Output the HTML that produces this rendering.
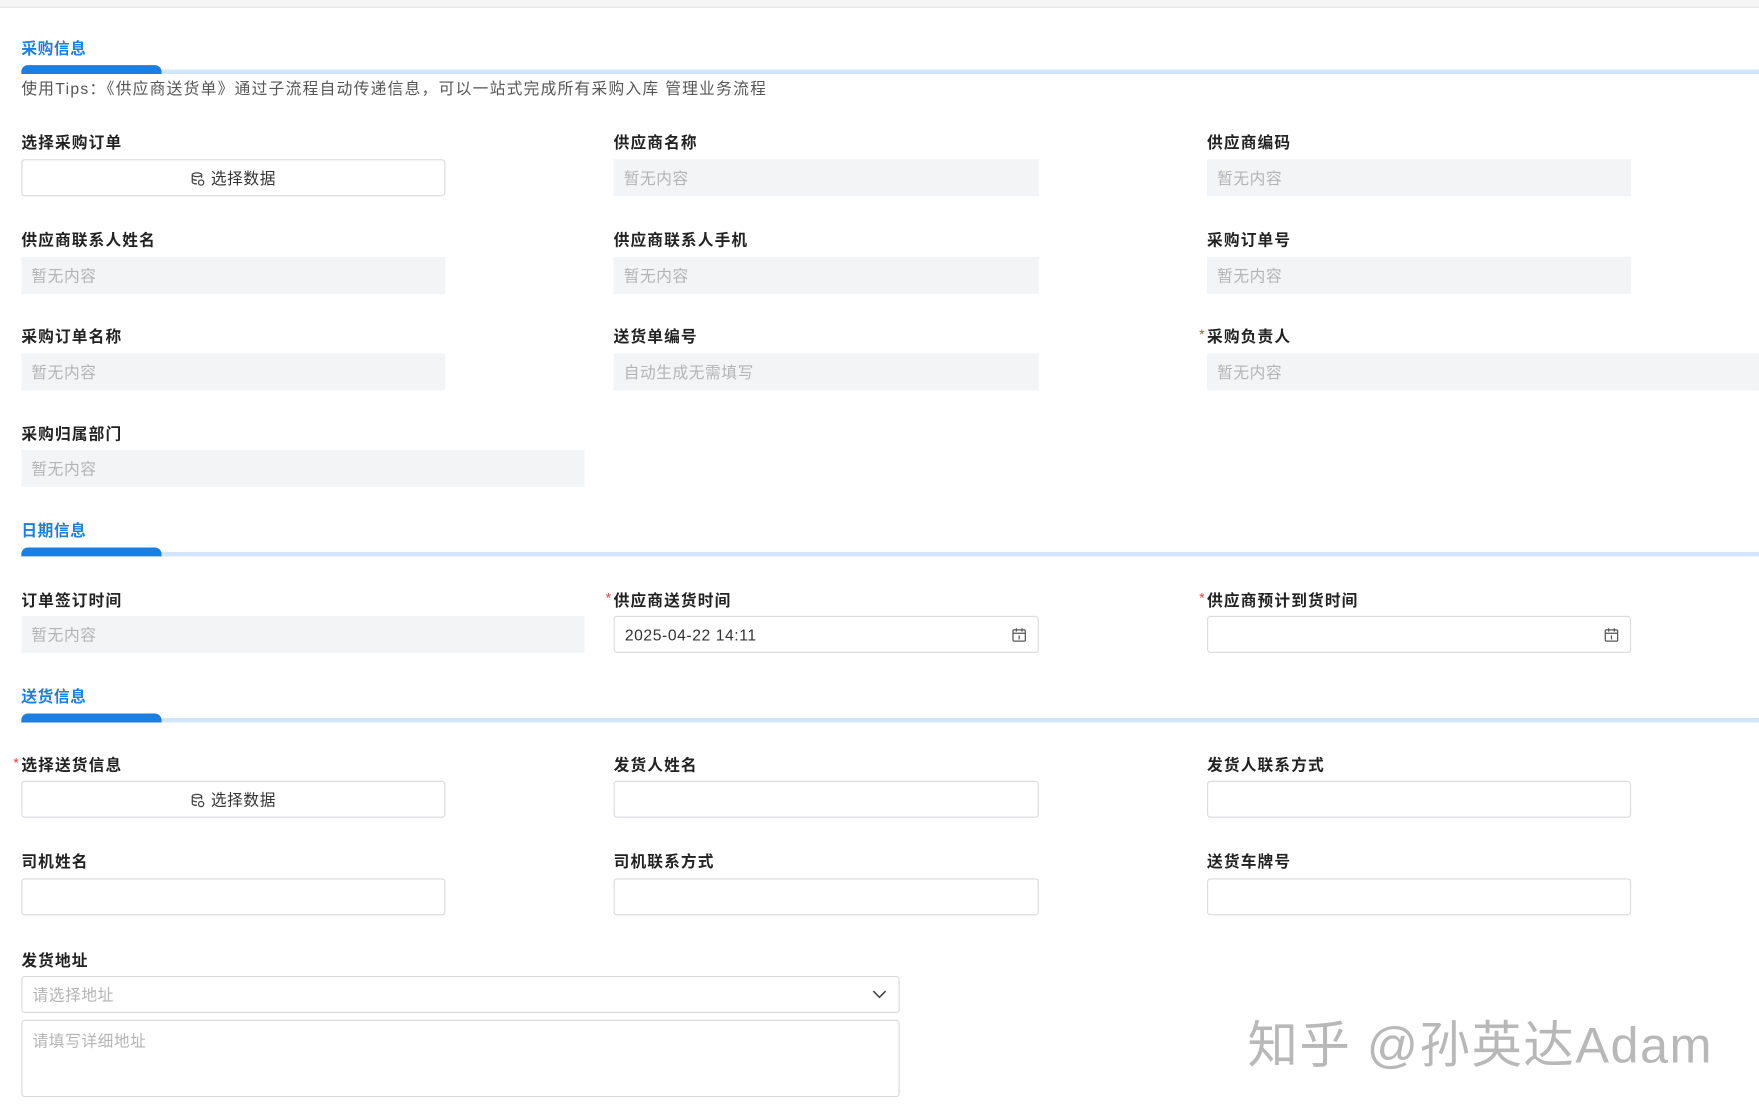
<!DOCTYPE html>
<html><head><meta charset="utf-8"><style>
html,body{margin:0;padding:0;background:#fff;width:1759px;height:1116px;overflow:hidden}
#w{position:absolute;left:0;top:0;width:1568px;height:995px;transform:scale(1.1218);transform-origin:0 0;font-family:"Liberation Sans","Noto Sans CJK SC",sans-serif}
.a{position:absolute}
.t{position:absolute;left:19px;color:#1a7fe0;font-weight:bold;font-size:14px;line-height:20px;top:1px;letter-spacing:0.5px}
.bl{position:absolute;left:19px;width:125px;height:8px;background:#1a7fe0;border-radius:6px 6px 0 0}
.ln{position:absolute;left:140px;right:0;height:4px;background:#d3e5f8}
.lb{position:absolute;font-size:14px;font-weight:bold;color:#222;line-height:22px;letter-spacing:1px}
.lb i{color:#e33;font-style:normal;font-weight:normal;position:absolute;left:-7px;top:-2px;font-size:12px}
.bx{position:absolute;height:33px;box-sizing:border-box;font-size:14px;line-height:35px;padding-left:9px;color:#b4b4b4;letter-spacing:0.5px}
.g{background:#f3f4f6}
.o{border:1px solid #d9dadd;border-radius:3px;background:#fff;line-height:33px}
.btn{text-align:center;color:#333;padding:0}
.cal{position:absolute;right:10px;top:9px}
</style></head><body><div id="w">
<div class="a" style="left:0;top:0;width:1568px;height:6px;background:#f5f5f5;border-bottom:1px solid #e6e6e6"></div>

<div class="t" style="top:33px">采购信息</div>
<div class="ln" style="top:62px"></div><div class="bl" style="top:58px"></div>
<div class="a" style="left:19px;top:69px;font-size:14px;color:#555;line-height:20px;letter-spacing:1.15px">使用Tips：《供应商送货单》通过子流程自动传递信息，可以一站式完成所有采购入库 管理业务流程</div>

<div class="lb" style="left:19px;top:116px">选择采购订单</div>
<div class="bx o btn" style="left:19px;top:142px;width:378px"><svg width="13" height="13" viewBox="0 0 14 14" style="vertical-align:-2px;margin-right:5px" fill="none" stroke="#444" stroke-width="1.2"><ellipse cx="6" cy="3" rx="4.5" ry="1.8"/><path d="M1.5 3v7c0 1 2 1.8 4.5 1.8M10.5 3v3M1.5 6.5c0 1 2 1.8 4.5 1.8"/><circle cx="10" cy="10.5" r="2.5"/></svg>选择数据</div>
<div class="lb" style="left:547px;top:116px">供应商名称</div>
<div class="bx g" style="left:547px;top:142px;width:379px">暂无内容</div>
<div class="lb" style="left:1076px;top:116px">供应商编码</div>
<div class="bx g" style="left:1076px;top:142px;width:378px">暂无内容</div>

<div class="lb" style="left:19px;top:203px">供应商联系人姓名</div>
<div class="bx g" style="left:19px;top:229px;width:378px">暂无内容</div>
<div class="lb" style="left:547px;top:203px">供应商联系人手机</div>
<div class="bx g" style="left:547px;top:229px;width:379px">暂无内容</div>
<div class="lb" style="left:1076px;top:203px">采购订单号</div>
<div class="bx g" style="left:1076px;top:229px;width:378px">暂无内容</div>

<div class="lb" style="left:19px;top:289px">采购订单名称</div>
<div class="bx g" style="left:19px;top:315px;width:378px">暂无内容</div>
<div class="lb" style="left:547px;top:289px">送货单编号</div>
<div class="bx g" style="left:547px;top:315px;width:379px">自动生成无需填写</div>
<div class="lb" style="left:1076px;top:289px"><i>*</i>采购负责人</div>
<div class="bx g" style="left:1076px;top:315px;width:492px">暂无内容</div>

<div class="lb" style="left:19px;top:376px">采购归属部门</div>
<div class="bx g" style="left:19px;top:401px;width:502px">暂无内容</div>

<div class="t" style="top:463px">日期信息</div>
<div class="ln" style="top:492px"></div><div class="bl" style="top:488px"></div>

<div class="lb" style="left:19px;top:524px">订单签订时间</div>
<div class="bx g" style="left:19px;top:549px;width:502px">暂无内容</div>
<div class="lb" style="left:547px;top:524px"><i>*</i>供应商送货时间</div>
<div class="bx o" style="left:547px;top:549px;width:379px;color:#333">2025-04-22 14:11<svg class="cal" width="13" height="14" viewBox="0 0 13 14" fill="none" stroke="#555" stroke-width="1.1"><rect x="1" y="2.5" width="11" height="10" rx="1"/><path d="M1 5.5h11M4 1v3M9 1v3M6.5 7.5v3.5"/></svg></div>
<div class="lb" style="left:1076px;top:524px"><i>*</i>供应商预计到货时间</div>
<div class="bx o" style="left:1076px;top:549px;width:378px"><svg class="cal" width="13" height="14" viewBox="0 0 13 14" fill="none" stroke="#555" stroke-width="1.1"><rect x="1" y="2.5" width="11" height="10" rx="1"/><path d="M1 5.5h11M4 1v3M9 1v3M6.5 7.5v3.5"/></svg></div>

<div class="t" style="top:611px">送货信息</div>
<div class="ln" style="top:640px"></div><div class="bl" style="top:636px"></div>

<div class="lb" style="left:19px;top:671px"><i>*</i>选择送货信息</div>
<div class="bx o btn" style="left:19px;top:696px;width:378px"><svg width="13" height="13" viewBox="0 0 14 14" style="vertical-align:-2px;margin-right:5px" fill="none" stroke="#444" stroke-width="1.2"><ellipse cx="6" cy="3" rx="4.5" ry="1.8"/><path d="M1.5 3v7c0 1 2 1.8 4.5 1.8M10.5 3v3M1.5 6.5c0 1 2 1.8 4.5 1.8"/><circle cx="10" cy="10.5" r="2.5"/></svg>选择数据</div>
<div class="lb" style="left:547px;top:671px">发货人姓名</div>
<div class="bx o" style="left:547px;top:696px;width:379px"></div>
<div class="lb" style="left:1076px;top:671px">发货人联系方式</div>
<div class="bx o" style="left:1076px;top:696px;width:378px"></div>

<div class="lb" style="left:19px;top:757px">司机姓名</div>
<div class="bx o" style="left:19px;top:783px;width:378px"></div>
<div class="lb" style="left:547px;top:757px">司机联系方式</div>
<div class="bx o" style="left:547px;top:783px;width:379px"></div>
<div class="lb" style="left:1076px;top:757px">送货车牌号</div>
<div class="bx o" style="left:1076px;top:783px;width:378px"></div>

<div class="lb" style="left:19px;top:845px">发货地址</div>
<div class="bx o" style="left:19px;top:870px;width:783px">请选择地址<svg class="a" style="right:10px;top:11px" width="14" height="9" viewBox="0 0 14 9" fill="none" stroke="#444" stroke-width="1.4"><path d="M1.5 1.5l5.5 5.5 5.5-5.5"/></svg></div>
<div class="bx o" style="left:19px;top:909px;width:783px;height:69px;line-height:36px;padding-top:0">请填写详细地址</div>

<div class="a" style="left:1112px;top:904px;font-size:45px;line-height:56px;color:#b8b8b8;letter-spacing:1.3px;white-space:nowrap;text-shadow:1px 1px 0 #fff">知乎 @孙英达Adam</div>
</div></body></html>
